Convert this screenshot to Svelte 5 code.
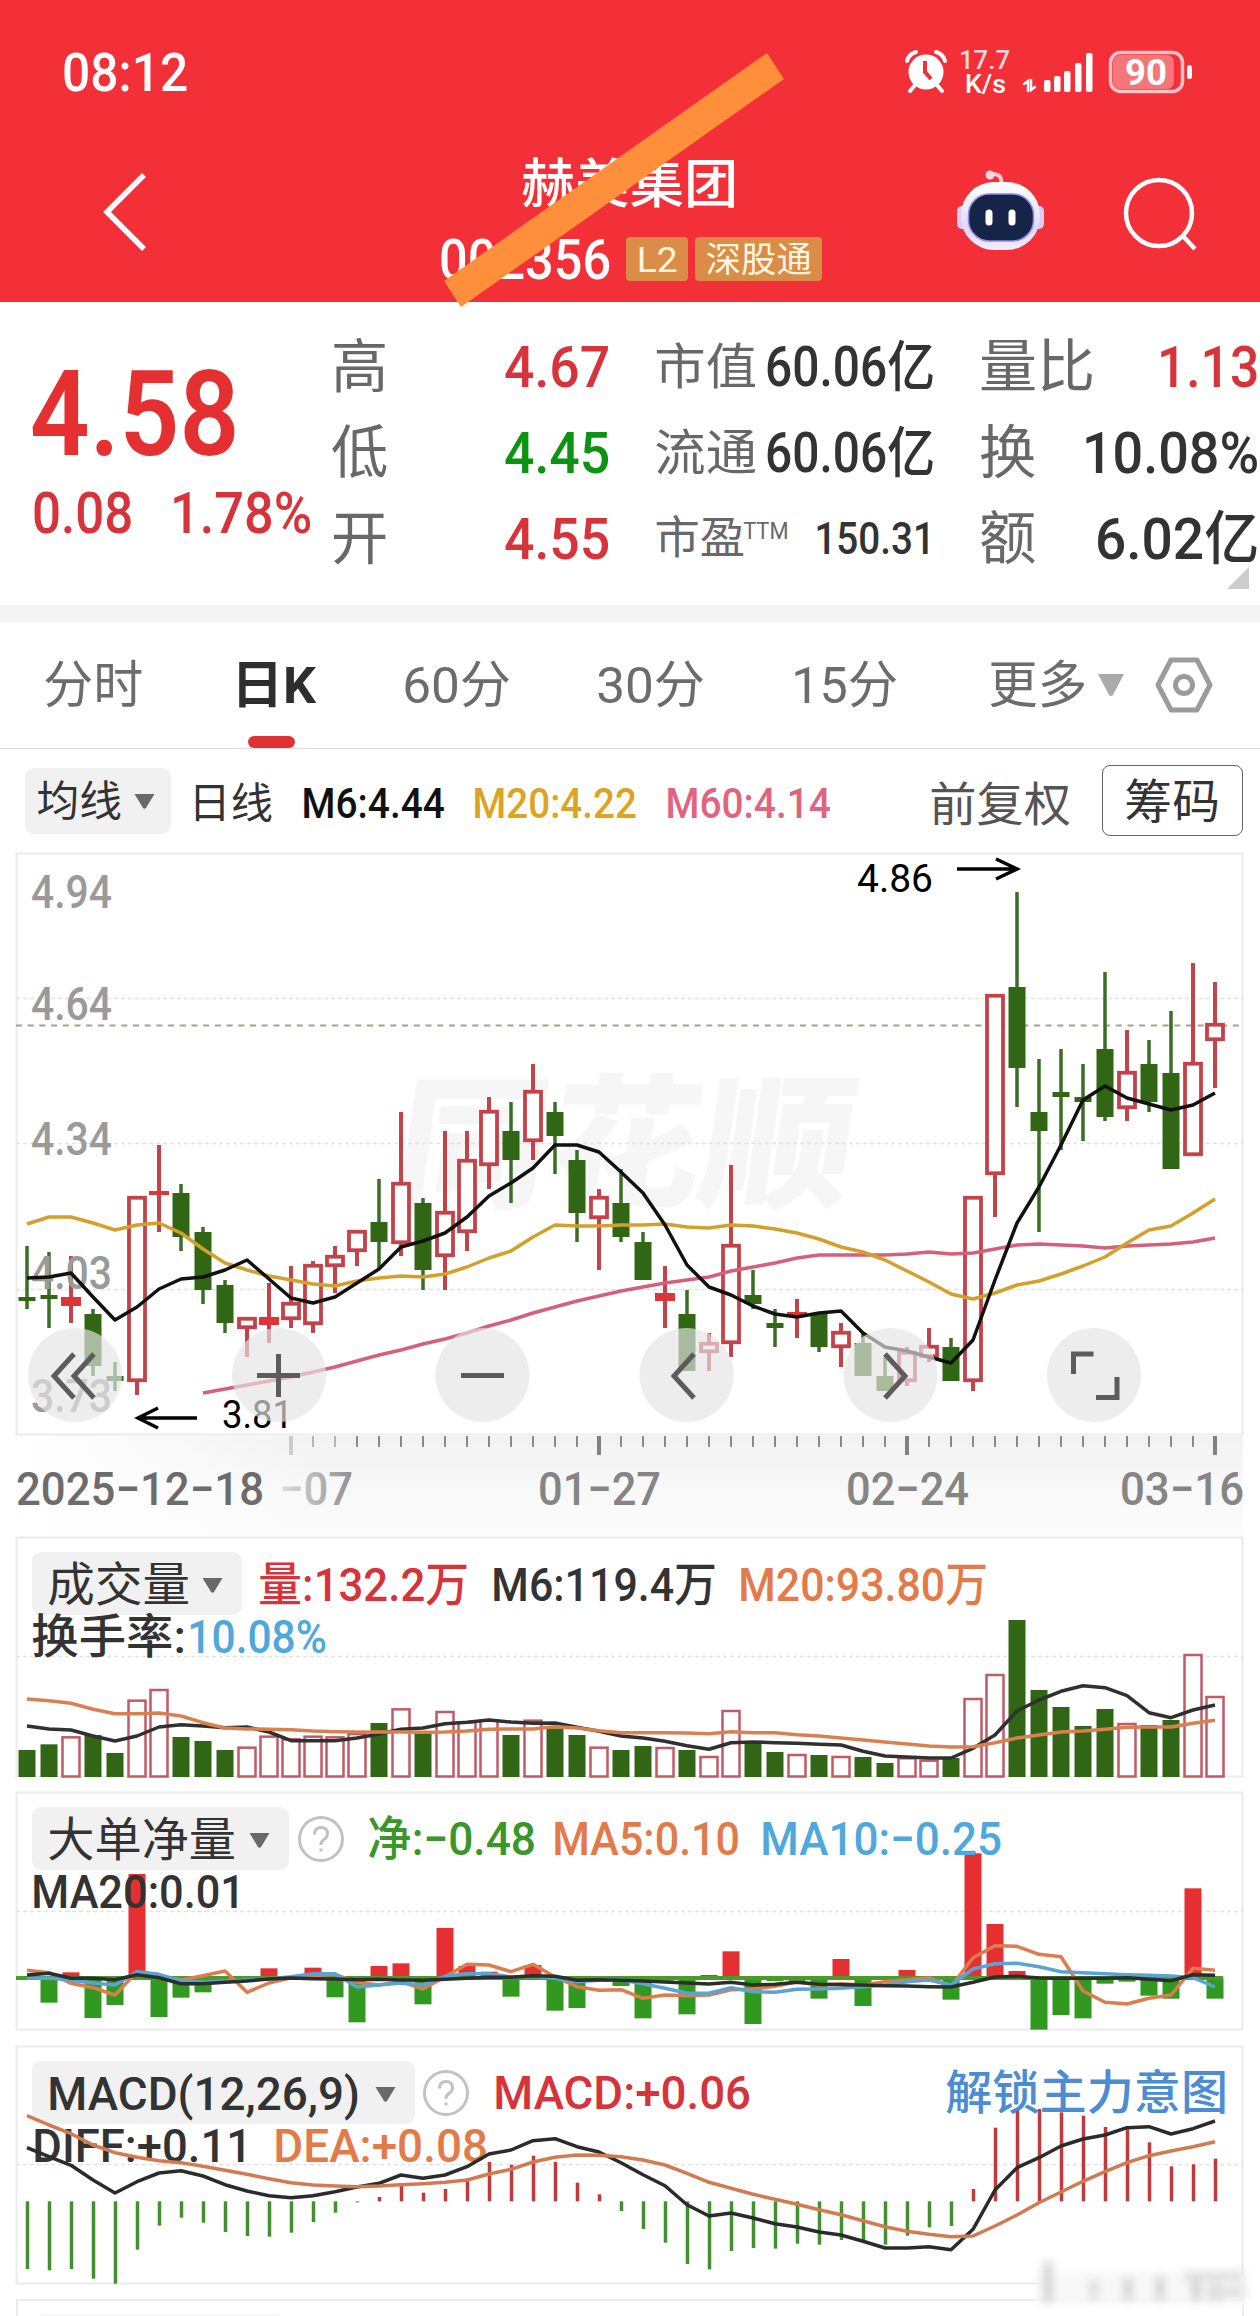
<script lang="ts">
	type Candle = [kind: 'r' | 'g', high: number, top: number, bottom: number, low: number];
	type Bar = [kind: 'r' | 'g', value: number];

	const STEP = 22;
	const x = (i: number) => 27 + STEP * i;

	const line = (values: number[], y: (v: number) => number, start = 0) =>
		values.map((v, i) => `${x(i + start)},${y(v).toFixed(1)}`).join(' ');

	const same = (v: number) => v;
	const yVolume = (v: number) => 1530 + v / 3;
	const yNet = (v: number) => 1785 + v / 3;
	const yMacd = (v: number) => 2040 + v / 3;

	const candles: Candle[] = [
		['g', 1246, 1297, 1301, 1309], ['g', 1252, 1295, 1299, 1328], ['r', 1256, 1297, 1306, 1323],
		['g', 1309, 1314, 1366, 1376], ['g', 1362, 1376, 1381, 1391], ['r', 1196, 1196, 1382, 1395],
		['r', 1145, 1191, 1195, 1232], ['g', 1184, 1193, 1237, 1251], ['g', 1227, 1232, 1290, 1304],
		['g', 1280, 1285, 1323, 1333], ['r', 1317, 1317, 1329, 1357], ['r', 1283, 1317, 1325, 1343],
		['r', 1266, 1302, 1320, 1328], ['r', 1261, 1264, 1325, 1333], ['r', 1246, 1255, 1267, 1293],
		['r', 1230, 1230, 1252, 1266], ['g', 1179, 1222, 1242, 1268], ['r', 1112, 1182, 1244, 1256],
		['g', 1198, 1203, 1270, 1290], ['r', 1131, 1211, 1257, 1290], ['r', 1131, 1159, 1233, 1251],
		['r', 1097, 1110, 1166, 1189], ['g', 1102, 1131, 1160, 1203], ['r', 1064, 1090, 1142, 1160],
		['g', 1102, 1112, 1136, 1174], ['g', 1150, 1160, 1213, 1242], ['r', 1189, 1196, 1219, 1270],
		['g', 1169, 1203, 1237, 1242], ['g', 1232, 1242, 1280, 1280], ['r', 1266, 1293, 1301, 1328],
		['g', 1290, 1314, 1371, 1371], ['r', 1333, 1342, 1353, 1371], ['r', 1165, 1244, 1344, 1357],
		['g', 1270, 1295, 1304, 1309], ['g', 1309, 1323, 1328, 1347], ['r', 1299, 1312, 1316, 1338],
		['g', 1314, 1314, 1347, 1352], ['r', 1323, 1331, 1348, 1367], ['g', 1333, 1343, 1376, 1376],
		['g', 1357, 1376, 1391, 1391], ['r', 1347, 1351, 1382, 1386], ['r', 1328, 1345, 1358, 1362],
		['g', 1338, 1347, 1381, 1381], ['r', 1196, 1196, 1382, 1391], ['r', 994, 994, 1175, 1217],
		['g', 892, 987, 1068, 1107], ['g', 1059, 1112, 1131, 1232], ['g', 1049, 1092, 1097, 1150],
		['g', 1064, 1097, 1102, 1141], ['g', 972, 1049, 1117, 1121], ['r', 1030, 1071, 1109, 1121],
		['g', 1040, 1064, 1102, 1112], ['g', 1011, 1073, 1169, 1169], ['r', 963, 1062, 1156, 1156],
		['r', 982, 1023, 1041, 1088]
	];

	const m6 = [
		1278, 1277, 1273, 1297, 1320, 1307, 1289, 1279, 1277, 1270, 1260, 1279, 1298, 1303, 1297, 1283, 1269, 1247,
		1241, 1233, 1217, 1196, 1183, 1168, 1145, 1145, 1152, 1172, 1193, 1225, 1265, 1287, 1295, 1306, 1314, 1317,
		1313, 1311, 1333, 1347, 1351, 1357, 1363, 1340, 1280, 1223, 1187, 1145, 1100, 1086, 1098, 1104, 1110, 1105, 1093
	];
	const m20 = [
		1224, 1217, 1217, 1223, 1230, 1225, 1223, 1233, 1249, 1263, 1270, 1276, 1280, 1284, 1286, 1281, 1278, 1276,
		1277, 1274, 1267, 1258, 1251, 1237, 1225, 1226, 1226, 1225, 1225, 1224, 1227, 1228, 1225, 1226, 1229, 1233,
		1239, 1247, 1252, 1260, 1271, 1282, 1294, 1299, 1293, 1285, 1281, 1274, 1266, 1257, 1243, 1230, 1226, 1213, 1199
	];
	const m60 = [
		1393, 1389, 1385, 1381, 1377, 1372, 1367, 1361, 1355, 1350, 1344, 1339, 1333, 1326, 1320, 1313, 1307, 1301,
		1296, 1291, 1287, 1283, 1280, 1277, 1271, 1267, 1263, 1258, 1255, 1255, 1255, 1255, 1254, 1252, 1254, 1253,
		1249, 1245, 1244, 1245, 1246, 1248, 1246, 1245, 1244, 1242, 1238
	];

	const volume: Bar[] = [
		['g', 660], ['g', 643], ['r', 622], ['g', 615], ['g', 669], ['r', 512], ['r', 480], ['g', 621], ['g', 633],
		['g', 660], ['r', 653], ['r', 620], ['r', 628], ['r', 620], ['r', 622], ['r', 612], ['g', 579], ['r', 538],
		['g', 610], ['r', 546], ['r', 577], ['r', 572], ['g', 615], ['r', 572], ['g', 595], ['g', 615], ['r', 653],
		['g', 660], ['g', 648], ['r', 654], ['g', 660], ['r', 681], ['r', 543], ['g', 636], ['g', 666], ['r', 675],
		['g', 675], ['r', 681], ['g', 681], ['g', 699], ['r', 685], ['r', 692], ['g', 684], ['r', 507], ['r', 435],
		['g', 270], ['g', 480], ['g', 531], ['g', 588], ['g', 537], ['r', 582], ['g', 585], ['g', 570], ['r', 375],
		['r', 501]
	];
	const volumeM6 = [
		588, 597, 600, 618, 633, 618, 591, 584, 588, 593, 591, 606, 632, 632, 632, 624, 612, 598, 594, 581, 577, 570,
		576, 580, 579, 592, 604, 618, 624, 634, 647, 658, 638, 636, 638, 640, 643, 645, 664, 678, 681, 684, 684, 655,
		615, 543, 510, 484, 467, 473, 497, 548, 563, 540, 525
	];
	const volumeM20 = [
		507, 512, 520, 538, 551, 551, 549, 558, 578, 594, 597, 598, 599, 603, 605, 606, 606, 606, 607, 606, 603, 598,
		597, 597, 590, 594, 602, 608, 608, 608, 609, 611, 605, 608, 608, 614, 618, 624, 630, 636, 642, 648, 651, 650,
		638, 624, 615, 606, 603, 598, 592, 591, 591, 580, 571
	];

	const NET_ZERO = 578;
	const net = [
		578, 653, 562, 699, 660, 267, 696, 638, 622, 578, 578, 550, 578, 548, 637, 712, 543, 535, 658, 429, 543, 560,
		635, 540, 677, 669, 578, 603, 700, 587, 688, 570, 499, 717, 588, 588, 641, 522, 663, 578, 555, 588, 644, 205,
		417, 558, 734, 690, 700, 596, 590, 632, 641, 310, 641
	];
	const netMa5 = [
		556, 563, 595, 608, 630, 560, 572, 585, 572, 558, 622, 594, 578, 572, 568, 592, 600, 590, 612, 575, 538, 540,
		560, 538, 576, 605, 616, 614, 640, 630, 632, 630, 614, 612, 604, 590, 600, 596, 600, 590, 585, 578, 605, 518,
		482, 484, 508, 515, 618, 652, 657, 640, 630, 550, 556
	];
	const netMa10 = [
		580, 579, 586, 594, 600, 560, 568, 588, 592, 588, 585, 582, 575, 566, 566, 606, 600, 594, 600, 574, 566, 566,
		576, 574, 580, 590, 586, 584, 596, 610, 625, 625, 608, 620, 622, 613, 612, 610, 605, 600, 590, 585, 600, 552,
		536, 535, 545, 560, 563, 566, 569, 571, 573, 578, 606
	];
	const netMa20 = [
		570, 565, 580, 580, 584, 569, 578, 596, 596, 592, 588, 582, 579, 581, 582, 584, 583, 585, 586, 583, 580, 577,
		577, 572, 574, 586, 584, 586, 588, 591, 594, 597, 592, 600, 598, 592, 598, 599, 600, 602, 603, 605, 606, 592,
		576, 574, 579, 580, 580, 580, 578, 583, 587, 569, 571
	];

	const MACD_ZERO = 484;
	const macd = [
		687, 691, 687, 716, 731, 629, 557, 533, 548, 576, 588, 590, 578, 546, 518, 487, 471, 433, 458, 447, 416, 366,
		374, 347, 366, 428, 463, 513, 567, 608, 672, 688, 633, 624, 626, 611, 614, 600, 603, 614, 587, 562, 558, 447,
		263, 212, 207, 217, 227, 261, 268, 307, 379, 373, 356
	];
	const diff = [
		323, 350, 376, 420, 459, 425, 399, 392, 408, 434, 453, 467, 473, 467, 455, 441, 430, 405, 415, 405, 380, 342,
		330, 302, 296, 320, 336, 368, 404, 437, 494, 528, 519, 534, 551, 561, 576, 585, 604, 624, 624, 620, 629, 568,
		450, 383, 353, 318, 297, 285, 263, 260, 282, 266, 243
	];
	const dea = [
		227, 255, 281, 315, 338, 352, 362, 368, 379, 391, 403, 416, 428, 435, 438, 440, 438, 434, 431, 427, 420, 402,
		388, 366, 352, 345, 346, 350, 360, 375, 400, 427, 445, 463, 478, 493, 509, 524, 542, 560, 574, 583, 590, 588,
		558, 525, 488, 456, 424, 395, 368, 347, 333, 320, 305
	];

	const scale = [
		{ text: '4.94', y: 908 },
		{ text: '4.64', y: 1020 },
		{ text: '4.34', y: 1155 },
		{ text: '4.03', y: 1289 },
		{ text: '3.73', y: 1412 }
	];

	const signal = [[1044, 80], [1054, 76], [1064, 71], [1075, 63], [1086, 53]];
	const ticks = Array.from({ length: 43 }, (_, i) => i + 12);
</script>

<!-- one line of type squeezed to an exact width; the box is as tall as a capital -->
{#snippet fit(text: string, width: number, cap: number, cls = '')}
	<svg class="fit {cls}" {width} height={cap}>
		<text
			x={-cap * 0.05}
			y={cap}
			font-size={cap / 0.711}
			textLength={width + cap * 0.08}
			lengthAdjust="spacingAndGlyphs">{text}</text>
	</svg>
{/snippet}

{#snippet arrow()}
	<svg class="arrow" width="23" height="16" viewBox="0 0 23 16">
		<path d="M1.5 1h20L13 15q-1.500 1.500-3 0z" />
	</svg>
{/snippet}

{#snippet help()}
	<svg class="help" width="48" height="48" viewBox="0 0 48 48">
		<circle cx="24" cy="24" r="21.500" />
		<path d="M17.500 19.500q0-7 6.500-7t6.500 6.500q0 3-3.500 5.500T24 30" />
		<path d="M24 33.500v3" />
	</svg>
{/snippet}

<div class="screen">
	<header>
		<div class="status">
			{@render fit('08:12', 123, 38, 'medium')}
			<svg class="system" width="290" height="58" viewBox="904 43 290 58">
				<circle cx="926" cy="72" r="17.500" />
				<path class="thin" d="M907 61q2-7 9-9M945 61q-2-7-9-9" />
				<path class="thin" d="M915 85l-5 6M937 85l5 6" />
				<path class="hand" d="M925 61v11l6 7" />
				<text class="soft" x="959" y="69" font-size="25" textLength="51" lengthAdjust="spacingAndGlyphs">17.7</text>
				<text class="rate" x="965" y="93" font-size="25" textLength="41" lengthAdjust="spacingAndGlyphs">K/s</text>
				<path class="updown" d="M1024 84l4-3v10M1031 80v10l4-3" />
				{#each signal as [sx, sy]}
					<rect x={sx} y={sy} width="6.500" height={92 - sy} rx="2" />
				{/each}
				<rect class="cell" x="1110.500" y="52.500" width="72" height="39" rx="10" />
				<rect class="charge" x="1113" y="55" width="61" height="34" rx="7" />
				<rect x="1187" y="65" width="5" height="14" rx="2.500" />
				<text class="bold" x="1125" y="85" font-size="36" textLength="42" lengthAdjust="spacingAndGlyphs">90</text>
			</svg>
		</div>
		<div class="nav">
			<svg class="back" width="46" height="82" viewBox="0 0 46 82"><path d="M42 3L5 40l37 37" /></svg>
			<div class="title">
				{@render fit('赫美集团', 214, 38, 'medium')}
				<div class="code">
					{@render fit('002356', 169, 39, 'medium')}
					<span class="badge">{@render fit('L2', 39, 25)}</span>
					<span class="badge">{@render fit('深股通', 104, 25)}</span>
				</div>
			</div>
			<svg class="robot" width="90" height="84" viewBox="955 170 90 84">
				<defs>
					<linearGradient id="shell" x1="0" y1="0" x2="0" y2="1">
						<stop offset="0" stop-color="#fff" />
						<stop offset=".7" stop-color="#dcd9fb" />
						<stop offset="1" stop-color="#f6efff" />
					</linearGradient>
				</defs>
				<path class="antenna" d="M1001 187q2-11-8-11" />
				<circle cx="990" cy="177" r="4.500" fill="#ffd5dc" />
				<rect x="957" y="208" width="12" height="23" rx="5" fill="#d9cdf8" />
				<rect x="1032" y="208" width="12" height="23" rx="5" fill="#d9cdf8" />
				<rect x="961" y="184" width="79" height="68" rx="33" fill="url(#shell)" />
				<rect x="968.500" y="196" width="65" height="47" rx="21" fill="#172449" stroke="#8f8ae0" stroke-width="1.500" />
				<path d="M989 215v9M1012 215v9" stroke="#fff" stroke-width="7" stroke-linecap="round" />
			</svg>
			<svg class="search" width="78" height="78" viewBox="1120 176 78 78">
				<circle cx="1158" cy="214" r="33" />
				<path d="M1182 237l12 13" />
			</svg>
		</div>
		<svg class="stroke" width="360" height="280" viewBox="435 40 360 280">
			<path d="M767 53L784 79 461 307 444 281z" />
		</svg>
	</header>

	<section class="quote">
		<div class="price">
			{@render fit('4.58', 203, 84, 'heavy')}
			<div class="change">
				{@render fit('0.08', 98, 41, 'medium')}
				{@render fit('1.78%', 139, 41, 'medium')}
			</div>
		</div>
		<div class="stats">
			<div>{@render fit('高', 54, 41, 'label')}{@render fit('4.67', 103, 41, 'up medium')}</div>
			<div>{@render fit('市值', 100, 35, 'label')}{@render fit('60.06亿', 167, 39, 'medium')}</div>
			<div>{@render fit('量比', 113, 41, 'label')}{@render fit('1.13', 99, 41, 'up medium')}</div>
			<div>{@render fit('低', 54, 41, 'label')}{@render fit('4.45', 103, 41, 'down medium')}</div>
			<div>{@render fit('流通', 100, 35, 'label')}{@render fit('60.06亿', 167, 39, 'medium')}</div>
			<div>{@render fit('换', 54, 41, 'label')}{@render fit('10.08%', 174, 41, 'medium')}</div>
			<div>{@render fit('开', 54, 41, 'label')}{@render fit('4.55', 103, 41, 'up medium')}</div>
			<div>
				<span class="pe">{@render fit('市盈', 88, 32, 'label')}{@render fit('TTM', 44, 17, 'label')}</span>
				{@render fit('150.31', 118, 32, 'medium')}
			</div>
			<div>{@render fit('额', 54, 41, 'label')}{@render fit('6.02亿', 161, 41, 'medium')}</div>
		</div>
		<svg class="corner" width="22" height="22" viewBox="0 0 22 22"><path d="M22 0v22H0z" /></svg>
	</section>

	<nav class="tabs">
		{@render fit('分时', 97, 36)}
		<span class="tab-active">{@render fit('日K', 82, 36, 'bold')}</span>
		{@render fit('60分', 106, 36)}
		{@render fit('30分', 106, 36)}
		{@render fit('15分', 104, 36)}
		{@render fit('更多', 96, 36)}
		<svg width="26" height="23" viewBox="0 0 26 23"><path d="M0 0h26L15 21q-2 2-4 0z" fill="#aaa" /></svg>
		<svg class="hexagon" width="58" height="56" viewBox="0 0 58 56">
			<path d="M16 3h26L55 28 42 53H16L3 28z" />
			<circle cx="29" cy="28" r="8.500" />
		</svg>
	</nav>

	<div class="averages">
		<span class="pill">{@render fit('均线', 83, 30)}{@render arrow()}</span>
		{@render fit('日线', 82, 30, 'lower')}
		{@render fit('M6:4.44', 141, 30, 'black medium lower')}
		{@render fit('M20:4.22', 162, 30, 'yellow medium lower')}
		{@render fit('M60:4.14', 163, 30, 'pink medium lower')}
		{@render fit('前复权', 139, 33, 'grey lowest')}
		<button>{@render fit('筹码', 93, 33)}</button>
	</div>

	<svg class="kline" width="1260" height="584" viewBox="0 852 1260 584">
		<rect class="frame" x="16.500" y="853.500" width="1226" height="581" />
		<text class="brand" transform="translate(390 1196) skewX(-8)" font-size="144" textLength="458" lengthAdjust="spacingAndGlyphs">同花顺</text>
		{#each [998, 1143, 1289] as gy}
			<path class="grid" d="M16 {gy}.5H1243" />
		{/each}
		<path class="last" d="M16 1025.500H1243" />

		{#each candles as [kind, high, top, bottom, low], i}
			<g class={kind}>
				{#if kind === 'g'}
					<path d="M{x(i)} {high}V{low}" stroke-width="3.500" />
					<rect x={x(i) - 8.5} y={top} width="17" height={bottom - top} />
				{:else}
					<path d="M{x(i)} {high}V{top}M{x(i)} {bottom}V{low}" stroke-width="4" />
					{#if bottom - top > 9}
						<rect class="hollow" x={x(i) - 8} y={top + 1.75} width="16" height={bottom - top - 3.5} />
					{:else}
						<rect x={x(i) - 10} y={top} width="20" height={bottom - top} />
					{/if}
				{/if}
			</g>
		{/each}

		{#each scale as mark}
			<text class="mark" x="31" y={mark.y} font-size="46.500" textLength="81" lengthAdjust="spacingAndGlyphs">{mark.text}</text>
		{/each}
		<polyline points={line(m60, same, 8)} stroke="#d4607c" />
		<polyline points={line(m20, same)} stroke="#d3a02c" />
		<polyline points={line(m6, same)} stroke="#111" />

		<text x="857" y="892" font-size="39" textLength="76" lengthAdjust="spacingAndGlyphs">4.86</text>
		<path class="pointer" d="M957 869H1016M996 859l21 10-21 10" />
		<text x="222" y="1428" font-size="39" textLength="71" lengthAdjust="spacingAndGlyphs">3.81</text>
		<path class="pointer" d="M197 1418H139M158 1408l-20 10 20 10" />

		{#each [75, 279, 482.5, 686.5, 890.5, 1094] as cx}
			<circle class="knob" {cx} cy="1375" r="47" />
		{/each}
		<g class="glyph">
			<path d="M74 1354l-20 22 20 22M94 1354l-20 22 20 22" />
			<path d="M257 1375.500h43M278.500 1354v43" />
			<path d="M461 1375.500h43" />
			<path d="M694 1354l-20 22 20 22" />
			<path d="M885 1354l20 22-20 22" />
			<path d="M1073.500 1374v-20h20M1117 1377v20.500h-21" />
		</g>
	</svg>

	<svg class="axis" width="1260" height="100" viewBox="0 1436 1260 100">
		<defs>
			<linearGradient id="fade" x1="0" y1="0" x2="0" y2="1">
				<stop offset="0" stop-color="#f2f2f2" />
				<stop offset=".5" stop-color="#f8f8f8" />
				<stop offset="1" stop-color="#fbfbfb" />
			</linearGradient>
			<linearGradient id="clear" x1="0" y1="0" x2="1" y2="0">
				<stop offset="0" stop-color="#fff" />
				<stop offset="1" stop-color="#fff" stop-opacity="0" />
			</linearGradient>
			<linearGradient id="dim" x1="0" y1="0" x2="1" y2="0">
				<stop offset="0" stop-color="#dedede" />
				<stop offset="1" stop-color="#8f8f8f" />
			</linearGradient>
		</defs>
		<rect x="16" y="1434" width="1227" height="104" fill="url(#fade)" />
		<rect x="16" y="1434" width="300" height="104" fill="url(#clear)" />
		{#each ticks as t}
			{#if t % 14 === 12}
				<path d="M{x(t)} 1435v20" stroke-width="4" stroke={t === 12 ? '#ccc' : '#808080'} />
			{:else}
				<path d="M{x(t)} 1435v12" stroke-width="2" stroke={t < 15 ? '#b5b5b5' : '#8a8a8a'} />
			{/if}
		{/each}
		<text class="date" x="16" y="1505" fill="#6c6c6c" textLength="248" lengthAdjust="spacingAndGlyphs">2025−12−18</text>
		<text class="date" x="279" y="1505" fill="url(#dim)" textLength="74" lengthAdjust="spacingAndGlyphs">−07</text>
		<text class="date" x="538" y="1505" fill="#858585" textLength="123" lengthAdjust="spacingAndGlyphs">01−27</text>
		<text class="date" x="846" y="1505" fill="#858585" textLength="123" lengthAdjust="spacingAndGlyphs">02−24</text>
		<text class="date" x="1120" y="1505" fill="#858585" textLength="124" lengthAdjust="spacingAndGlyphs">03−16</text>
	</svg>

	<section class="panel volume">
		<svg class="plot" width="1260" height="244" viewBox="0 1536 1260 244">
			<rect class="frame" x="16.500" y="1537.500" width="1226" height="239" />
			<path class="grid" d="M16 1656.500H1243" />
			{#each volume as [kind, v], i}
				{#if kind === 'g'}
					<rect class="solid" x={x(i) - 8.5} y={yVolume(v)} width="17" height={1777 - yVolume(v)} />
				{:else}
					<rect class="outline" x={x(i) - 8.5} y={yVolume(v)} width="17" height={1776.5 - yVolume(v)} />
				{/if}
			{/each}
			<polyline points={line(volumeM6, yVolume)} stroke="#303030" />
			<polyline points={line(volumeM20, yVolume)} stroke="#d9804f" />
		</svg>
		<div class="legend">
			<div class="row">
				<span class="pill">{@render fit('成交量', 140, 33)}{@render arrow()}</span>
				{@render fit('量:132.2万', 208, 33, 'up medium')}
				{@render fit('M6:119.4万', 223, 33, 'medium')}
				{@render fit('M20:93.80万', 247, 33, 'orange medium')}
			</div>
			<div class="second">
				{@render fit('换手率:', 152, 33, 'medium')}
				{@render fit('10.08%', 137, 33, 'blue medium')}
			</div>
		</div>
	</section>

	<section class="panel net">
		<svg class="plot" width="1260" height="241" viewBox="0 1791 1260 241">
			<rect class="frame" x="16.500" y="1792.500" width="1226" height="237" />
			<path class="grid" d="M16 1911.500H1243" />
			{#each net as v, i}
				<rect
					x={x(i) - 8.5}
					y={yNet(Math.min(v, NET_ZERO))}
					width="17"
					height={Math.abs(v - NET_ZERO) / 3}
					fill={v < NET_ZERO ? '#e62f31' : '#31991f'}
				/>
			{/each}
			<path d="M16 1978H1223" stroke="#4c9a2a" stroke-width="4" />
			<polyline points={line(netMa5, yNet)} stroke="#dd7c4d" />
			<polyline points={line(netMa10, yNet)} stroke="#5ba3d0" />
			<polyline points={line(netMa20, yNet)} stroke="#2b2f2b" />
		</svg>
		<div class="legend">
			<div class="row">
				<span class="pill">{@render fit('大单净量', 186, 33)}{@render arrow()}</span>
				{@render help()}
				{@render fit('净:−0.48', 166, 33, 'green medium')}
				{@render fit('MA5:0.10', 185, 33, 'orange medium')}
				{@render fit('MA10:−0.25', 239, 33, 'blue medium')}
			</div>
			<div class="second">{@render fit('MA20:0.01', 211, 33, 'medium')}</div>
		</div>
	</section>

	<section class="panel macd">
		<svg class="plot" width="1260" height="241" viewBox="0 2045 1260 241">
			<rect class="frame" x="16.500" y="2046.500" width="1226" height="237" />
		</svg>
		<div class="legend">
			<div class="row">
				<span class="pill">{@render fit('MACD(12,26,9)', 310, 33, 'medium')}{@render arrow()}</span>
				{@render help()}
				{@render fit('MACD:+0.06', 255, 33, 'up medium')}
				{@render fit('解锁主力意图', 280, 33, 'link medium')}
			</div>
			<div class="second">
				{@render fit('DIFF:+0.11', 217, 33, 'medium')}
				{@render fit('DEA:+0.08', 212, 33, 'orange medium')}
			</div>
		</div>
		<svg class="plot" width="1260" height="241" viewBox="0 2045 1260 241">
			<path class="grid" d="M16 2164.500H1243" />
			{#each macd as v, i}
				<path
					d="M{x(i) + 0.5} {yMacd(MACD_ZERO)}V{yMacd(v)}"
					stroke={v < MACD_ZERO ? '#c0393d' : '#42902f'}
					stroke-width="3.500"
				/>
			{/each}
			<polyline points={line(diff, yMacd)} stroke="#2b2b2b" />
			<polyline points={line(dea, yMacd)} stroke="#d27a50" />
		</svg>
	</section>

	<section class="next"><span></span></section>
	<svg class="smudge" width="230" height="60" viewBox="1030 2256 230 60">
		<rect x="1036" y="2272" width="212" height="32" fill="#f8f8f8" />
		<path d="M1048 2262v40M1128 2278v22M1160 2276v24M1196 2274v26" stroke="#c9c9c9" stroke-width="7" />
		<path d="M1094 2280v20M1216 2282v20M1185 2276h58M1205 2292h40" stroke="#dedede" stroke-width="9" />
	</svg>
</div>

<style>
	:global(body) {
		margin: 0;
		background: #fff;
	}

	.screen {
		position: relative;
		width: 1260px;
		height: 2316px;
		overflow: hidden;
		background: #fff;
		color: #333;
		font-family: Roboto, 'Noto Sans CJK SC', sans-serif;
	}

	svg {
		display: block;
		flex: none;
	}

	.fit {
		overflow: visible;
		fill: currentColor;
	}

	.medium {
		font-weight: 500;
	}

	.heavy {
		font-weight: 600;
	}

	.bold {
		font-weight: 700;
	}

	.up { color: #d6343a; }
	.down { color: #0b9411; }
	.label { color: #686868; }
	.black { color: #111; }
	.yellow { color: #dba423; }
	.pink { color: #df6480; }
	.grey { color: #555; }
	.orange { color: #e27a4a; }
	.blue { color: #4fa8db; }
	.green { color: #3a962a; }
	.link { color: #4b8cd2; }

	header {
		position: relative;
		box-sizing: border-box;
		height: 302px;
		padding-top: 49px;
		background: #f32f38;
		color: #fff;
	}

	.status {
		display: flex;
		justify-content: space-between;
		align-items: center;
		height: 46px;
		padding: 0 66px 0 64px;
	}

	.system {
		fill: #fff;
	}

	.system .thin,
	.system .updown {
		fill: none;
		stroke: #fff;
		stroke-width: 4;
		stroke-linecap: round;
	}

	.system .updown {
		stroke-width: 2.5;
	}

	.system .hand {
		fill: none;
		stroke: #f32f38;
		stroke-width: 4;
	}

	.system .soft {
		fill: #ffd5d7;
		font-weight: 500;
	}

	.system .rate {
		font-weight: 500;
	}

	.system .cell {
		fill: none;
		stroke: #fbc3c6;
		stroke-width: 3.5;
	}

	.system .charge {
		fill: #f5757b;
	}

	.nav {
		display: flex;
		padding: 63px 0 0 102px;
	}

	.back {
		margin-top: 14px;
		fill: none;
		stroke: #fff;
		stroke-width: 5.5;
	}

	.title {
		display: flex;
		flex-direction: column;
		width: 384px;
		margin: 7px 0 0 293px;
	}

	.title > .fit {
		margin-left: 82px;
	}

	.code {
		display: flex;
		align-items: center;
		margin-top: 34px;
	}

	.badge {
		display: flex;
		align-items: center;
		justify-content: center;
		width: 62px;
		height: 44px;
		margin-left: 16px;
		border-radius: 4px;
		background: #da8d48;
		color: #fff6df;
	}

	.badge + .badge {
		width: 127px;
		margin-left: 7px;
	}

	.robot {
		margin: 10px 0 0 130px;
	}

	.antenna {
		fill: none;
		stroke: #f8c8d4;
		stroke-width: 4;
	}

	.search {
		margin: 17px 0 0 76px;
		fill: none;
		stroke: #fff;
		stroke-width: 4.5;
	}

	.stroke {
		position: absolute;
		left: 435px;
		top: 40px;
		fill: #ff8f3a;
	}

	.quote {
		position: relative;
		display: flex;
		box-sizing: border-box;
		height: 320px;
		padding: 21px 0 0 34px;
		border-bottom: 17px solid #f5f5f5;
	}

	.price {
		width: 299px;
		padding-top: 48px;
		color: #e53032;
	}

	.change {
		display: flex;
		gap: 40px;
		margin-top: 37px;
		color: #d6343a;
	}

	.stats {
		display: grid;
		grid-template-columns: 276px 278px 277px;
		grid-auto-rows: 86px;
		column-gap: 47px;
	}

	.stats > div {
		display: flex;
		align-items: center;
		justify-content: space-between;
	}

	.pe {
		display: flex;
	}

	.corner {
		position: absolute;
		right: 11px;
		top: 265px;
		fill: #ccc;
	}

	.tabs {
		display: grid;
		grid-template-columns: 188px 171px 194px 195px 197px 108px 57px 1fr;
		align-items: center;
		height: 126px;
		padding-left: 45px;
		border-bottom: 1px solid #ddd;
		color: #6c6c6c;
	}

	.tab-active {
		display: flex;
		flex-direction: column;
		gap: 33px;
		padding-top: 44px;
		color: #2e2e2e;
	}

	.tab-active::after {
		content: '';
		width: 47px;
		height: 12px;
		margin-left: 15px;
		border-radius: 6px;
		background: #df3235;
	}

	.hexagon {
		fill: none;
		stroke: #9b9b9b;
		stroke-width: 5;
		stroke-linejoin: round;
	}

	.averages {
		display: grid;
		grid-template-columns: 165px 113px 171px 193px 264px 171px 141px;
		align-items: center;
		height: 103px;
		padding-left: 25px;
	}

	.averages .lower {
		margin-top: 4px;
	}

	.averages .lowest {
		margin-top: 8px;
	}

	.pill {
		display: flex;
		align-items: center;
		justify-content: space-between;
		box-sizing: border-box;
		height: 63px;
		padding: 2px 18px 0 17px;
		border-radius: 9px;
		background: #f1f1f1;
	}

	.averages .pill {
		width: 146px;
		height: 66px;
		padding: 0 15px 0 13px;
	}

	.arrow {
		fill: #696969;
	}

	button {
		display: flex;
		align-items: center;
		justify-content: center;
		height: 71px;
		padding: 2px 0 0;
		border: 1.5px solid #666;
		border-radius: 8px;
		background: none;
		color: #333;
		font: inherit;
	}

	.frame {
		fill: none;
		stroke: #ebebeb;
		stroke-width: 2;
	}

	.grid {
		stroke: #e2e2e2;
		stroke-width: 1.5;
		stroke-dasharray: 4 3;
	}

	.last {
		stroke: #a3a481;
		stroke-width: 1.8;
		stroke-dasharray: 6 5.7;
	}

	polyline {
		fill: none;
		stroke-width: 3.5;
		stroke-linejoin: round;
	}

	.brand {
		fill: #f6f6f6;
		font-weight: 900;
	}

	.mark {
		fill: #9a9a9a;
		font-weight: 500;
	}

	.date {
		font-size: 46.5px;
		font-weight: 500;
	}

	.g {
		fill: #316714;
		stroke: #3b6d26;
	}

	.g rect {
		stroke: none;
	}

	.r {
		fill: #dd3538;
		stroke: #c4424a;
	}

	.r rect {
		stroke: none;
	}

	.r .hollow {
		fill: #fff;
		stroke: #c4424a;
		stroke-width: 3.8;
	}

	.pointer {
		fill: none;
		stroke: #000;
		stroke-width: 3.5;
	}

	.kline > text:not(.mark):not(.brand) {
		fill: #000;
	}

	.knob {
		fill: rgba(228, 228, 228, 0.67);
	}

	.glyph {
		fill: none;
		stroke: #5c5c5c;
		stroke-width: 5;
	}

	.panel {
		display: grid;
		height: 241px;
	}

	.panel > * {
		grid-area: 1 / 1;
	}

	.volume {
		height: 244px;
		margin-bottom: 11px;
	}

	.net {
		margin-bottom: 13px;
	}

	.macd {
		margin-bottom: 13px;
	}

	.solid {
		fill: #316714;
	}

	.outline {
		fill: #fff;
		stroke: #c05a66;
		stroke-width: 2.5;
	}

	.legend {
		padding: 16px 0 0 32px;
	}

	.row {
		display: grid;
		align-items: center;
		height: 63px;
	}

	.volume .row {
		grid-template-columns: 210px 233px 247px 247px;
	}

	.volume .row > :nth-child(n + 2) {
		margin: 2px 0 0 18px;
	}

	.net .row {
		grid-template-columns: 265px 72px 185px 208px 240px;
	}

	.net .pill {
		width: 257px;
	}

	.macd .row {
		grid-template-columns: 390px 73px 452px 279px;
	}

	.macd .pill {
		width: 383px;
	}

	.second {
		display: flex;
		gap: 4px;
		margin-top: 5px;
		padding-left: 1px;
	}

	.macd .second {
		gap: 24px;
		padding-left: 2px;
	}

	.help {
		fill: none;
		stroke: #c2c2c2;
		stroke-width: 3;
	}

	.next {
		box-sizing: border-box;
		width: 1228px;
		height: 40px;
		margin-left: 16px;
		padding: 14px 0 0 16px;
		border: 2px solid #ebebeb;
	}

	.next span {
		display: block;
		width: 252px;
		height: 20px;
		border-radius: 9px;
		background: #f1f1f1;
	}

	.smudge {
		position: absolute;
		left: 1030px;
		top: 2256px;
		fill: none;
		filter: blur(4px);
	}
</style>
